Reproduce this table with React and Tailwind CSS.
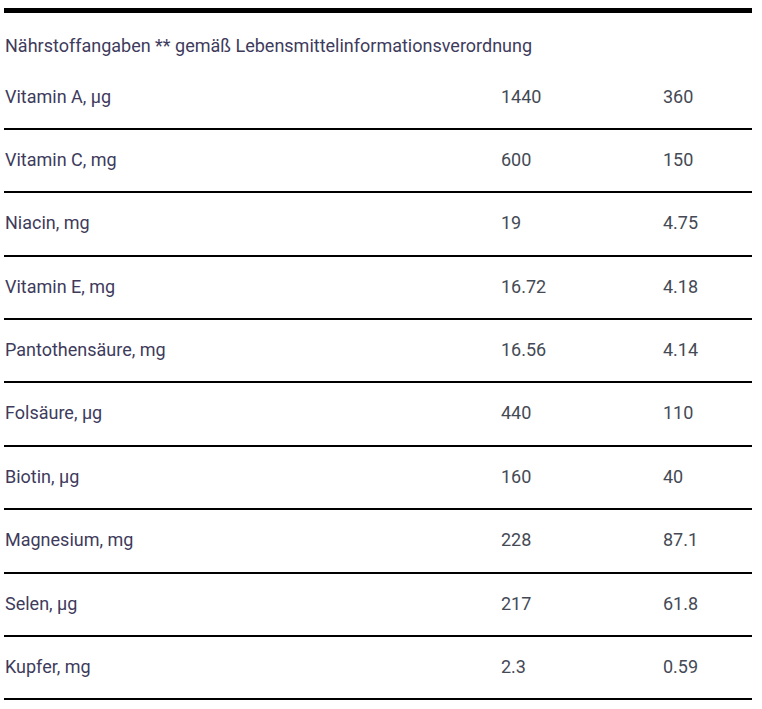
export default function App() {
  const rows = [
    ["Vitamin A, µg", "1440", "360"],
    ["Vitamin C, mg", "600", "150"],
    ["Niacin, mg", "19", "4.75"],
    ["Vitamin E, mg", "16.72", "4.18"],
    ["Pantothensäure, mg", "16.56", "4.14"],
    ["Folsäure, µg", "440", "110"],
    ["Biotin, µg", "160", "40"],
    ["Magnesium, mg", "228", "87.1"],
    ["Selen, µg", "217", "61.8"],
    ["Kupfer, mg", "2.3", "0.59"],
  ];
  return (
    <div className="bg-white w-[762px] h-[709px] overflow-hidden pt-[7.5px] px-[4px] text-[18px] leading-[24px]" style={{ fontFamily: "Roboto, 'Liberation Sans', sans-serif" }}>
      <div className="w-[748px] border-t-[5px] border-black">
        <div className="pt-[21.5px] pb-[8.5px] pl-[1px] text-[#3e3b5c]">
          Nährstoffangaben ** gemäß Lebensmittelinformationsverordnung
        </div>
        {rows.map((r, i) => (
          <div key={i} className="grid grid-cols-[497px_162px_1fr] pt-[18px] pb-[19.4px] border-b-2 border-black">
            <div className="pl-[1px] text-[#3e3b5c]">{r[0]}</div>
            <div className="text-[#444a55]">{r[1]}</div>
            <div className="text-[#444a55]">{r[2]}</div>
          </div>
        ))}
      </div>
    </div>
  );
}
